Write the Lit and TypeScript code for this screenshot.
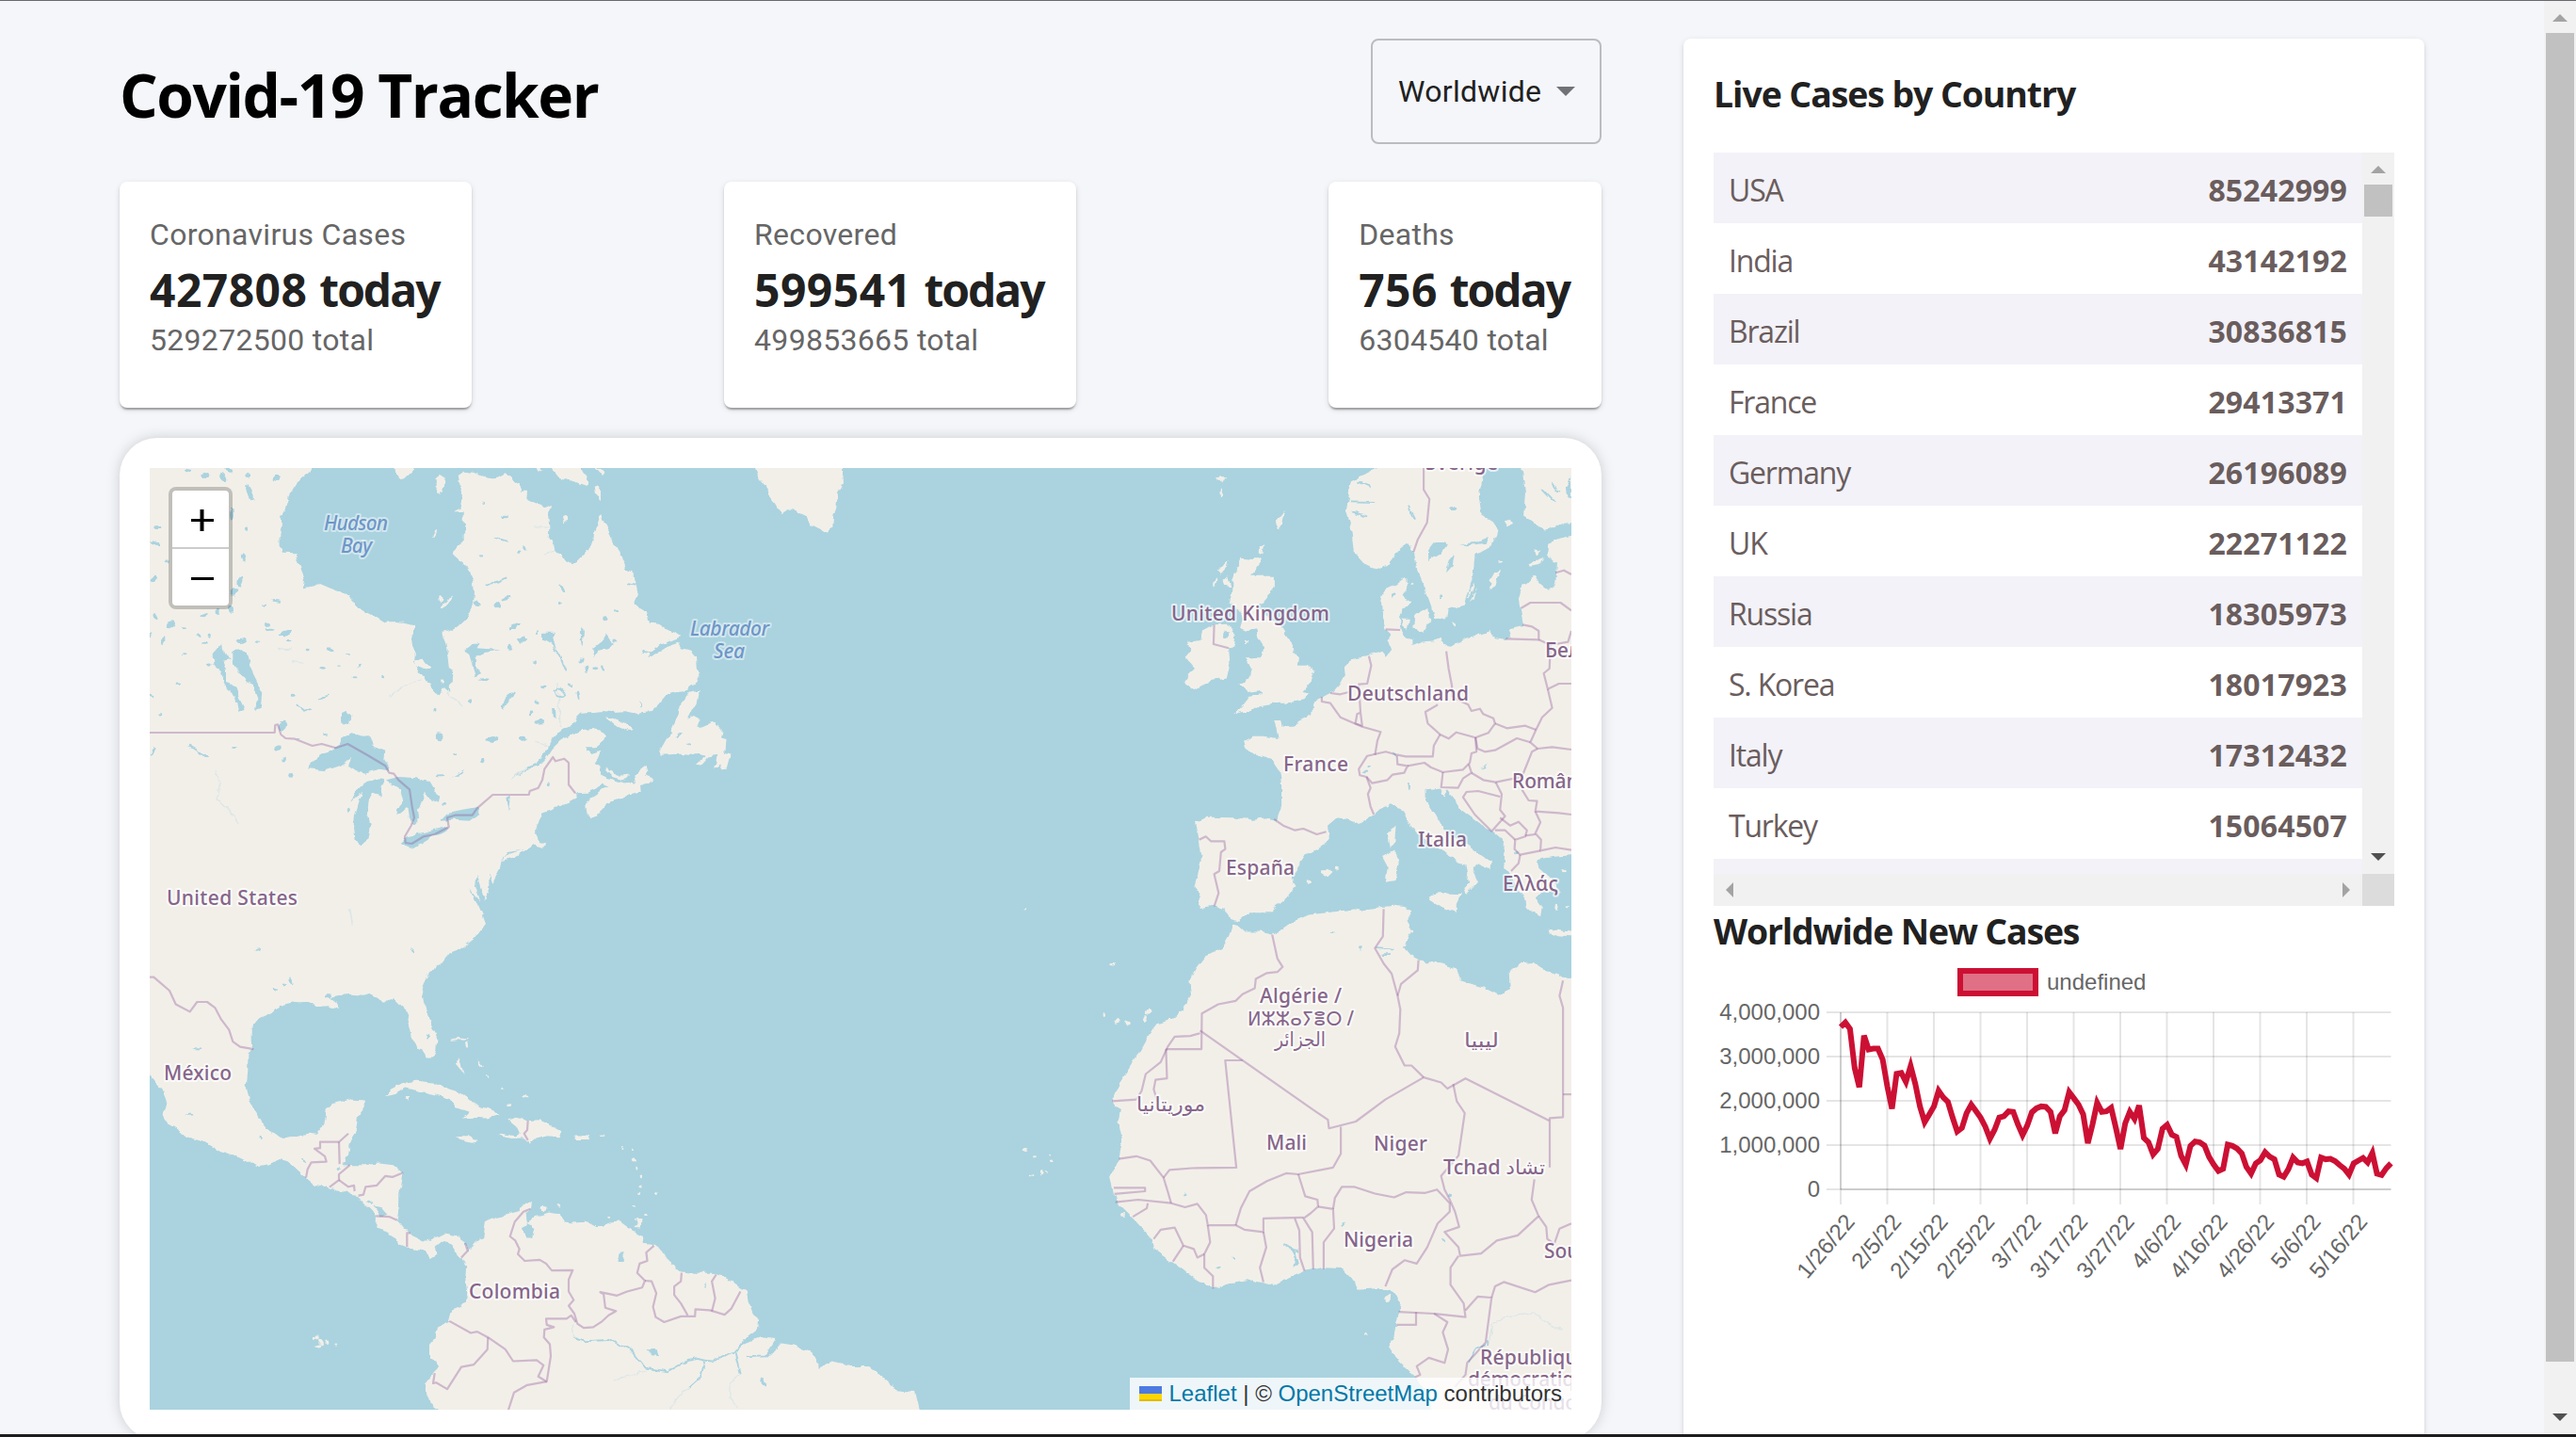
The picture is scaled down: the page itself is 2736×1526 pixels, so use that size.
import { LitElement, html, svg, css } from "lit";
import { customElement, property } from "lit/decorators.js";

/* ---------- map geometry ---------- */

// Survey sheets: origin on the canvas and units per pixel on each axis.
type Sheet = [number, number, number, number];
const SHEETS: Record<string, Sheet> = {
  A: [140, 480, 3, 3],
  B: [540, 480, 3, 3],
  C: [1120, 480, 2.8, 3],
  D: [1120, 960, 2.7034, 2.7703],
  E: [140, 960, 3, 2.7703],
  F: [600, 960, 2.8, 2.7703],
};

// "A 1,2 3,4 B 5,6" -> canvas points; a letter switches the sheet.
function trace(src: string, close = false): string {
  let sheet = SHEETS.A;
  const out: string[] = [];
  for (const token of src.trim().split(/\s+/)) {
    if (SHEETS[token]) {
      sheet = SHEETS[token];
      continue;
    }
    const [x, y] = token.split(",").map(Number);
    out.push(`${(sheet[0] + x / sheet[2]).toFixed(1)} ${(sheet[1] + y / sheet[3]).toFixed(1)}`);
  }
  return "M" + out.join("L") + (close ? "Z" : "");
}

const LAND = [
  // Americas
  `A 40,30 572,30 572,51 565,65 545,80 525,100 512,120 500,140 495,160 488,185 478,205 476,235 472,265 473,300 480,323 524,325 533,355 545,385 552,410 546,436 575,430 600,420 635,435 670,448 695,465 710,480 720,498 750,512 780,528 808,545 840,543 870,546 898,553 896,590 892,605 903,630 900,672 915,700 935,725 950,735 960,765 980,775 995,750 1012,765 1010,745 1022,730 1024,705 1010,685 1005,640 1000,610 992,590 988,572 1015,568 1045,550 1070,525 1088,490 1092,450 1088,410 1075,375 1050,350 1022,325 1035,300 1055,285 1055,260 1065,245 1055,220 1055,190 1025,190 1045,180 1052,150 1053,125 1042,100 1037,75 1055,62 1085,65 1110,75 1145,82 1165,80 1190,67 1215,90 1235,105 1240,125
   B 60,125 58,150 75,158 105,168 115,180 135,170 127,205 130,240 128,280 145,300 150,315 170,325 180,345 203,358 230,342 240,320 255,315 268,285 270,260 280,240 290,210 297,200 305,220 320,250 330,280 345,305 355,330 370,355 375,370 398,385 400,410 408,430 412,450 400,480 415,495 440,510 450,545 480,548 500,562 530,572 550,588 520,600 490,612 455,635 445,655 475,640 505,620 540,608 552,625 580,632 600,655 602,690 605,725 585,745 560,763 535,765 505,775 480,805 458,825 430,828 400,832 370,826 330,828 300,825 270,828 232,830 212,850 205,873 180,880 160,895 140,915 125,945 110,965 90,990 60,1005 30,1025 10,1040 30,1030 60,1012 98,998 120,975 140,945 165,920 200,900 235,885 270,882 295,887 312,905 305,925 280,940 245,940 265,960 295,950 285,975 275,990 292,1000 295,1025 310,1040 330,1045 350,1052 385,1050 405,1055 400,1035 415,1015 440,995 445,1020 440,1030 460,1040 445,1055 420,1062 422,1080 395,1088 370,1100 335,1110 312,1120 305,1135 290,1150 265,1165 250,1150 247,1125 260,1105 285,1088 300,1075 320,1065 300,1055 280,1072 250,1085 213,1087 215,1105 190,1118 165,1128 150,1130 140,1140 112,1150 100,1170 90,1195 80,1215 92,1225 95,1240 117,1250 110,1262 80,1255 60,1265 30,1270 0,1275
   A 1178,1300 1172,1330 1160,1350 1150,1380 1138,1345 1138,1390 1125,1430 1115,1400 1100,1350 1095,1380 1110,1430 1075,1390 1105,1445 1120,1480
   E 1095,15 1112,25 1125,60 1095,100 1050,130 1010,145 985,175 955,195 935,220 923,250 930,285 945,325 960,360 973,395 970,430 960,450 935,450 925,430 905,415 890,390 880,350 883,320 860,300 835,275 800,290 785,275 760,263 735,268 700,265 650,270 635,280 650,290 660,310 625,300 590,302 565,290 520,288 485,295 468,300 450,318 410,335 395,350 380,370 380,400 388,425 370,440 370,490 365,540 378,585 395,610 415,640 435,665 460,675 480,690 520,682 560,675 590,678 610,655 617,630 620,600 640,587 695,575 740,578 740,600 720,625 715,660 705,685 695,705 690,740 670,765 700,768 740,768 790,763 830,768 845,780 865,792 860,820 853,850 852,890 845,925 865,950 890,975 930,993 960,985 995,968 1030,975 1060,995 1075,1020 1090,1000 1120,980 1128,935 1160,922 1195,915 1230,905 1250,880 1275,880 1272,895 1255,905 1260,935 1290,918 1330,907 1360,912 1378,935 1410,938 1450,935 1480,950 1500,950
   F 130,938 165,935 200,960 232,975 235,1000 265,1002 290,1020 308,1050 345,1082 385,1085 440,1085 480,1100 540,1138 545,1170 560,1205 580,1220 578,1245 545,1270 520,1300 545,1290 580,1275 628,1280 615,1310 590,1330 610,1325 640,1292 680,1297 730,1318 750,1335 752,1365 790,1347 850,1360 900,1360 945,1390 990,1430 1042,1435 1060,1510
   E 990,1510 978,1488 940,1460 940,1435 930,1412 950,1390 975,1365 970,1345 948,1340 948,1300 965,1280 975,1245 1010,1230 1020,1195 1050,1185 1070,1155 1063,1100 1065,1065 1050,1040 1030,1020 1015,995 985,990 965,1005 970,1030 950,1042 930,1020 900,1015 875,1008 850,1000 845,985 800,960 778,955 780,920 755,895 730,870 712,855 680,850 630,835 585,825 555,805 520,775 490,755 465,750 440,765 410,770 370,760 330,742 280,725 230,700 175,685 150,665 120,650 100,620 112,585 98,545 57,502 40,490`,
  `A 838,40 840,65 850,88 870,85 905,51 915,40`,
  `A 980,72 998,80 995,105 982,132 968,110 968,85`,
  `A 905,665 930,662 952,685 945,692 900,678`,
  `A 1200,1282 1240,1268 1255,1268 1215,1295 1175,1305`,
  `B 120,30 135,51 160,80 200,92 250,108 255,95 230,51 220,30`,
  `B 272,110 285,105 297,125 297,150 275,130`,
  `B 172,205 185,200 187,215 172,228`,
  `B 275,45 310,62 300,75`,
  `B 85,45 110,55 95,62`,
  `B 303,843 340,850 370,860 398,885 385,888 345,872`,
  `B 612,755 575,765 550,805 540,840 525,870 520,895 500,915 480,950 485,965 540,962 580,965 610,962 630,968 600,995 615,998 640,970 665,965 658,1005 680,990 678,1012 695,1010 707,965 690,960 695,915 675,910 680,885 655,860 615,878 600,870 608,850 590,840 568,855 585,820 600,795 605,770`,
  `B 312,1000 320,1015 350,1028 385,1025 365,1045 330,1035 310,1015`,
  `B 780,30 788,51 800,85 820,110 830,140 850,165 868,195 890,183 920,190 950,205 960,230 1010,255 1033,240 1035,205 1045,175 1050,130 1065,100 1062,51 1062,30`,
  `E 808,565 825,545 860,528 905,520 960,525 1010,545 1045,555 1080,580 1110,595 1150,608 1172,622 1130,630 1080,628 1055,630 1075,612 1035,598 1020,575 985,565 940,555 905,548 870,542 840,560`,
  `E 1198,635 1225,628 1260,637 1300,635 1330,650 1365,668 1368,685 1320,682 1290,688 1268,705 1250,688 1210,690 1168,680 1175,675 1220,682 1235,675 1225,655`,
  `E 1032,682 1070,682 1102,695 1080,700 1045,692`,
  `E 1412,680 1462,680 1455,695 1412,695`,
  `E 1035,452 1050,475 1058,498 1045,485 1032,470`,
  `E 870,565 885,565 885,578 872,575`,
  `F 210,928 228,928 226,952 205,950 215,942`,
  // Europe
  `C 555,335 600,340 617,335 605,365 580,395 620,395 655,395 655,425 640,455 620,480 600,490 640,530 675,560 700,600 712,640 725,655 722,680 755,680 770,700 760,735 735,765 758,770 740,790 690,800 650,800 610,808 590,825 555,825 535,835 560,808 580,780 620,770 605,760 575,765 550,740 580,720 585,690 568,655 615,655 622,620 605,590 600,565 575,570 552,560 560,530 550,500 520,480 530,440 530,400 540,380`,
  `C 475,550 520,548 538,590 535,615 518,625 522,670 512,718 470,725 415,760 385,735 395,715 420,690 390,655 410,630 395,605 435,600 440,570`,
  `C 487,380 517,343 512,370 495,390`,
  `C 500,410 515,395 525,430 505,425`,
  `C 478,82 510,78 498,98 490,92`,
  `C 688,186 675,225 672,248 660,222`,
  `C 610,300 625,292 620,322 610,318`,
  `C 563,920 590,905 620,905 665,912 660,880 653,858 675,858 680,875 715,875 725,855 765,835 768,795 795,785 830,765 850,740 865,710 862,685 885,660 935,650 975,635 985,650 1000,630 990,600 1000,580 985,565 975,530 972,480 980,440 1010,425 1045,398 1048,430 1035,460 1060,475 1035,500 1025,540 1030,570 1045,590 1065,595 1065,618 1095,605 1130,600 1150,590 1160,615 1175,620 1230,595 1270,578 1297,570 1310,595 1340,600 1360,590 1350,565 1395,555 1385,500 1380,470 1390,425 1430,395 1445,420 1470,440 1490,420 1495,355 1465,330 1468,290 1500,275 1560,262 1560,1285 1537,1285 1480,1290 1435,1300 1440,1325 1465,1350 1490,1375 1497,1400 1455,1400 1430,1420 1450,1450 1445,1480 1420,1465 1405,1450 1400,1420 1375,1390 1355,1345 1335,1310 1338,1240 1305,1210 1270,1190 1240,1165 1210,1140 1195,1115 1165,1075 1158,1100 1145,1070 1105,1075 1105,1110 1130,1150 1155,1200 1195,1230 1240,1262 1300,1305 1298,1330 1255,1310 1242,1330 1260,1370 1225,1410 1218,1390 1235,1375 1222,1320 1180,1290 1140,1265 1100,1235 1060,1195 1040,1145 1000,1120 975,1130 950,1155 905,1185 870,1170 840,1165 812,1190 818,1235 780,1265 745,1285 720,1325 705,1355 715,1385 690,1420 655,1450 640,1465 580,1465 545,1495 520,1485 505,1455 475,1445 430,1452 435,1410 415,1385 430,1330 438,1290 430,1235 420,1180 455,1160 530,1162 590,1172 630,1168 660,1175 675,1130 675,1060 670,1020 645,980 600,965 570,945`,
  `C 1390,30 1390,51 1400,130 1395,200 1440,235 1455,250 1490,235 1560,215 1560,30`,
  `C 985,30 960,51 905,80 880,95 875,140 868,185 880,230 885,270 890,320 920,355 955,373 990,360 1025,310 1050,290 1070,320 1080,380 1100,430 1120,490 1130,535 1165,532 1170,500 1220,488 1235,430 1245,390 1250,330 1300,300 1320,250 1300,220 1270,200 1262,140 1275,70 1290,51 1290,30`,
  `C 1295,410 1308,385 1328,375 1310,420 1298,440 1292,430`,
  `C 1235,480 1255,425 1245,470`,
  `C 1410,355 1455,335 1440,360 1415,365`,
  `C 1425,310 1448,315 1435,330`,
  `C 1338,220 1355,215 1362,230 1348,238`,
  `C 1070,520 1110,495 1115,540 1095,575 1068,560`,
  `C 1030,530 1055,530 1050,560 1035,555`,
  `C 1182,540 1195,550 1190,560`,
  `C 990,1215 1015,1190 1012,1240 1000,1265`,
  `C 975,1290 1010,1268 1025,1300 1015,1365 985,1370 990,1320`,
  `C 1115,1415 1140,1405 1210,1408 1195,1440 1195,1468 1150,1450 1115,1425`,
  `C 790,1342 812,1328 825,1338 808,1355`,
  `C 1465,1520 1500,1524 1560,1532 1560,1545 1500,1540 1468,1530`,
  `C 565,600 578,600 570,612`,
  // Africa
  `D 512,62 525,62 545,82 590,82 625,90 655,75 690,50 730,32 790,25 860,15 890,20 930,10 975,5 1005,8 1028,20 1010,50 1028,80 1000,125 1020,150 1060,172 1110,175 1155,190 1165,225 1230,245 1280,270 1307,245 1305,200 1340,175 1375,172 1410,195 1450,208 1470,222 1510,218 1510,1510 1095,1510 1085,1488 1060,1425 1035,1390 990,1345 960,1300 975,1270 980,1240 990,1200 995,1170 970,1140 930,1130 875,1135 850,1100 825,1072 770,1070 720,1080 675,1100 628,1122 565,1107 500,1118 455,1132 400,1100 340,1055 290,1020 280,985 230,930 190,890 170,855 160,800 185,750 195,695 183,640 188,610 165,580 185,530 210,490 235,450 265,395 290,355 335,340 370,310 392,270 388,225 405,190 430,155 480,130 500,95`,
];

const WATER = [
  `A 558,1008 590,975 630,950 658,935 665,915 700,895 735,905 760,903 770,935 808,950 805,980 820,1005 818,1015 790,1010 745,1022 715,1015 690,998 700,975 660,1000 615,1015`,
  `A 700,1115 715,1080 740,1055 790,1042 805,1045 790,1070 795,1095 770,1085 755,1110 750,1150 762,1190 755,1230 728,1252 710,1240 705,1200 710,1160 725,1110 735,1085 715,1100`,
  `A 810,1045 850,1035 900,1038 950,1050 980,1100 978,1115 945,1100 925,1085 930,1110 912,1135 915,1170 895,1188 885,1165 880,1130 848,1158 840,1145 865,1115 855,1075`,
  `A 857,1245 880,1225 910,1215 940,1210 1010,1190 1000,1210 960,1225 920,1250 890,1262`,
  `A 980,1175 1005,1150 1050,1140 1105,1130 1105,1155 1075,1175 1030,1172`,
  `A 322,630 350,628 370,645 380,685 395,725 415,765 410,815 393,822 400,785 385,745 365,735 345,700 322,665`,
  `A 260,640 285,610 290,640 318,660 290,665 300,700 300,735 330,745 345,790 362,825 340,830 330,780 310,760 295,740 285,700 262,680`,
  `A 670,830 685,825 700,840 697,870 670,868 664,850`,
  `A 1180,810 1190,785 1220,768 1200,795 1183,822`,
  `A 1060,635 1090,612 1105,605 1102,625 1140,628 1175,630 1130,638 1090,650 1100,690 1110,705 1095,715 1085,680 1075,645`,
  `A 1198,1095 1208,1095 1204,1145`,
  `A 1012,1040 1060,1010 1050,1022`,
  `B 268,625 300,600 312,580 335,610 320,628 285,632 275,655`,
  `B 110,575 150,575 140,600 150,625 130,605 112,595`,
  `B 0,555 38,547 20,560 0,562`,
  `B 30,595 55,590 35,610`,
  `B 138,815 150,820 152,850 140,840`,
  `B 232,560 240,570 236,620 230,600`,
  `B 82,858 105,850 115,865 90,866`,
  `E 1245,955 1258,935 1265,940 1280,962 1275,982 1258,982`,
  `E 772,888 790,892 812,915 795,918`,
  `E 938,385 948,380 955,392 944,398`,
  `C 1112,310 1130,285 1160,285 1165,300 1148,325 1112,348`,
  `C 1165,385 1172,345 1190,322 1184,362`,
  `C 1205,295 1250,288 1290,270 1285,290 1230,298`,
  `C 1520,110 1537,80 1537,150 1522,135`,
  `C 1268,1010 1290,992 1282,1006`,
  `F 155,1050 165,1025 178,1022 172,1050`,
  `F 245,1310 270,1312 282,1330 262,1328`,
  `F 412,1115 420,1115 418,1130`,
  `F 582,1392 592,1395 598,1418 588,1412`,
  `D 668,1000 690,1020 700,1060 685,1068 690,1040`,
];

const RIVERS = [
  `F 25,1275 60,1283 130,1280 200,1315 240,1365 305,1375 350,1350 390,1338 435,1345 505,1320 540,1280 595,1270`,
  `F 415,1345 405,1390 370,1420`,
  `F 505,1320 520,1380`,
  `F 540,1330 600,1328 628,1285`,
  `B 160,905 200,890`,
  `B 160,750 145,762 152,778 170,782 178,765 162,750`,
  `B 140,620 165,650 185,700`,
  `B 425,635 455,640 480,628`,
  `B 380,420 405,425`,
  `A 180,935 205,945 215,965 245,966`,
  `A 1130,428 1165,412 1195,400`,
  `A 1155,272 1200,285`,
  `A 527,805 550,824 570,815`,
  `C 878,160 955,162`,
  `C 885,190 930,205`,
  `C 900,95 940,110`,
  `C 1050,170 1070,215`,
  `C 1450,115 1490,160`,
  `C 1480,100 1500,130`,
  `D 925,128 975,132`,
  `D 940,150 960,150`,
  `D 655,1000 700,1020`,
  `D 1190,1345 1210,1310 1235,1298`,
];

const FAINT = [
  `F 310,1488 340,1450 370,1420`,
  `F 145,1405 175,1392 240,1372`,
  `F 520,1380 490,1410 490,1450 515,1488`,
  `D 1248,1290 1255,1240 1300,1210 1375,1202 1410,1230 1460,1255`,
  `A 268,1015 282,1070 270,1110 305,1135 340,1185`,
  `A 510,668 545,672`,
  `A 465,625 510,630`,
  `A 820,778 870,745 920,722`,
  `A 1005,765 1050,810`,
  `A 695,1455 702,1500`,
  `E 695,15 702,60`,
  `B 155,735 162,800 165,880`,
  `B 85,240 125,240`,
  `B 115,325 150,310`,
  `B 10,1040 60,1005`,
  `B 85,922 125,935`,
  `E 1405,1240 1408,1270 1440,1283 1500,1280`,
];

const BORDERS = [
  `A 57,894 455,894 457,870 465,868 475,900 490,912 520,914 575,936 605,930 650,943 688,930 750,965 808,1000 820,1022 835,1025 850,1045 885,1075 893,1130 900,1165 890,1190 870,1225 872,1245 892,1248 930,1225 965,1218 1010,1195 1005,1165 1030,1157 1085,1157 1100,1135 1150,1092 1265,1092 B 68,1080 95,1070 108,1045 115,1010 142,972 150,985 178,977 192,990 192,1060 213,1087`,
  `E 57,215 70,215 120,255 140,295 185,317 208,288 240,288 265,305 285,340 310,370 322,405 345,420 388,427`,
  `E 555,805 560,780 572,760 620,758 615,742 582,720 600,718 600,700 660,700 690,675`,
  `E 660,700 662,765`,
  `E 695,768 660,795 660,812 630,833`,
  `E 660,812 690,832 708,828 710,845`,
  `E 722,858 738,855 745,832 780,828 808,800 830,803 865,790`,
  `E 778,918 820,920 845,930`,
  `E 887,968 877,968 877,1008`,
  `E 1062,998 1070,1020 1050,1040`,
  `E 1262,637 1260,665 1250,675 1262,695`,
  `E 1270,897 1248,905 1220,935 1205,978 1222,990 1235,1015 1230,1030 1252,1050 1300,1047 1320,1058 1338,1078 1405,1077 1392,1105 1392,1140 1408,1165 1392,1182 1410,1205 1420,1235 1440,1247 1470,1245 F 110,1228 130,1210 152,1198 120,1188 115,1148 105,1142 155,1152 185,1140 230,1128 238,1108 215,1085 222,1058 245,1050 242,1025 265,1005`,
  `E 1415,1230 1400,1210 1385,1220 1320,1220 1322,1238 1345,1245 1315,1252 1313,1275 1332,1295 1335,1330 1322,1405 1295,1390 1312,1357 1290,1342 1215,1345 1190,1310 1135,1275 1100,1258 1080,1262 1012,1227`,
  `E 1135,1275 1133,1310 1090,1355 1050,1362 1005,1427 970,1408 960,1410 965,1380`,
  `E 1322,1405 1260,1415 1218,1437 1200,1488`,
  `F 238,1108 258,1110 272,1145 262,1185 270,1215 295,1230 345,1213 387,1213 388,1192 430,1195 475,1208 495,1190 522,1140`,
  `F 347,1085 345,1110 325,1125 325,1150 345,1175 365,1210`,
  `F 450,1090 437,1110 447,1160 437,1198`,
  `C 1098,51 1098,120 1115,150 1108,225 1080,280 1068,318`,
  `C 985,565 1028,567`,
  `C 475,550 473,612 518,625`,
  `C 1490,385 1515,377 1537,390`,
  `C 1388,497 1415,480 1505,480 1537,505`,
  `C 1392,550 1420,556 1440,570 1440,598 1342,595`,
  `C 1440,598 1475,615 1472,690 1455,705 1467,755 1500,738 1537,738`,
  `C 1537,570 1527,605 1475,615`,
  `C 1467,755 1480,815 1450,845 1432,885 1415,925 1437,945 1480,940 1537,948`,
  `C 1165,635 1172,690 1182,745 1182,780`,
  `C 1140,805 1103,828 1110,865 1147,900 1172,913 1195,893 1252,910 1290,895 1310,865 1305,848 1275,835 1265,818 1240,825 1230,805 1182,780`,
  `C 1310,865 1345,880 1400,872 1432,885`,
  `C 1252,910 1258,945 1280,955 1310,950 1375,912 1415,925`,
  `C 1147,900 1128,935 1125,970 1045,970 1020,965 985,955 930,968 905,1010 908,1030 928,1035 945,1055 990,1045 1005,1028 1040,1022 1050,1000 1020,995 1018,965`,
  `C 1050,1000 1100,990 1120,1005 1155,1020 1215,1012 1235,990 1240,960 1255,955 1252,910`,
  `C 1155,1020 1150,1068 1200,1070 1215,1040 1240,1022 1232,995`,
  `C 1240,1022 1275,1045 1312,1052 1390,1035 1420,955 1437,945`,
  `C 1312,1052 1330,1090 1325,1140 1340,1160 1300,1208 1250,1155 1215,1100 1225,1083 1260,1080 1325,1098`,
  `C 1390,1075 1410,1110 1435,1112 1430,1145 1500,1150 1537,1155`,
  `C 1430,1145 1445,1180 1430,1215 1447,1235 1445,1270 1490,1260 1537,1268`,
  `C 1325,1165 1355,1190 1380,1178 1405,1205 1400,1225 1370,1235 1368,1265 1385,1283 1445,1270`,
  `C 1385,1283 1380,1310 1358,1335`,
  `C 1400,1222 1430,1218`,
  `C 1310,1205 1340,1205 1370,1235`,
  `C 653,1170 680,1190 715,1205 740,1200 780,1218 808,1210`,
  `C 430,1235 450,1225 465,1240 505,1240 508,1265 495,1275 490,1335 475,1345 488,1405 475,1448`,
  `C 950,1155 940,1130 932,1090 940,1070 928,1035`,
  `C 953,965 960,920 970,892 915,875 850,845 820,800 795,795 795,780`,
  `C 820,768 850,772 875,765`,
  `C 935,650 942,680 930,738 905,740 910,830 915,872 895,865 900,835 910,830`,
  `D 945,15 943,95 920,130 945,175 968,205 985,270 993,310 990,380 978,420 1005,475 1025,475 1060,510`,
  `D 1045,165 1043,195 995,235 985,270`,
  `D 625,90 640,160 655,185 640,200 610,203 578,220 575,248 540,265 520,285 470,295 423,322 422,427 320,427`,
  `D 418,380 390,388 345,390 325,420 305,465 262,500 250,550 235,575 165,580`,
  `D 320,427 323,513 290,517 285,545 295,580`,
  `D 418,372 742,605 785,635 788,660 865,640 950,575 1060,510 1110,525 1128,543 1180,513 1420,637`,
  `D 540,460 490,460 522,775 395,777 330,782 313,805`,
  `D 185,750 235,742 275,755 313,805 325,845 335,880`,
  `D 170,835 260,835 260,845 172,853`,
  `D 175,877 240,870 335,880 375,892 410,882 435,915 440,945 520,945 545,958 600,965 600,925 715,922`,
  `D 520,945 535,895 560,845 610,815 665,792 700,795 800,775 822,735 822,655`,
  `D 700,795 720,860 755,870 757,890 735,910 715,925 740,965 743,1075`,
  `D 757,890 800,897 803,955 773,995 773,1075`,
  `D 690,925 703,960 705,1040 718,1080`,
  `D 600,965 608,1010 590,1070 600,1112`,
  `D 440,945 447,995 430,1030 430,1070 455,1095 455,1132`,
  `D 268,880 265,895 225,920`,
  `D 285,985 305,958 345,952 370,1005 400,1015 410,1040 430,1030`,
  `D 370,1005 340,1052`,
  `D 800,897 805,865 825,832 860,832 920,852 975,863 1010,848 1065,850 1098,840 1135,880 1135,905 1100,940 1070,1010 1040,1058 1005,1048 970,1075 950,1125`,
  `D 1145,530 1155,580 1178,615 1160,740 1110,800 1120,840 1135,870 1150,905 1162,950 1120,965 1160,1010 1165,1035 1225,1028 1270,990 1330,975 1390,918 1370,870 1378,810`,
  `D 1160,1035 1137,1070 1137,1120 1175,1175 1180,1215 1090,1205 988,1200`,
  `D 1090,1205 1128,1230 1115,1260 1130,1310 1120,1350 1075,1335 1040,1360 1050,1385 1035,1392`,
  `D 1038,1200 1038,1238 983,1238`,
  `D 1180,1195 1215,1155 1255,1158 1238,1290 1185,1350 1180,1385 1150,1420`,
  `D 1255,1158 1265,1125 1290,1112 1380,1142 1420,1120 1484,1107`,
  `D 1390,918 1412,950 1415,985 1435,1000 1450,955 1484,940`,
  `D 1460,225 1450,270 1460,305 1460,627 1422,630 1422,775`,
  `D 1460,560 1484,560`,
];

// Small lakes: sheet, then x,y,rx,ry,angle in sheet units / pixels.
const PONDS: [string, number, number, number, number, number][] = [
  ["A", 235, 75, 5, 3, 0], ["A", 290, 80, 5, 3, 60], ["A", 178, 58, 2, 2, 0], ["A", 310, 58, 4, 2, 20],
  ["A", 375, 130, 2.5, 9, -20], ["A", 460, 85, 4, 3, -40], ["A", 370, 75, 2, 2, 0], ["A", 82, 240, 4, 2, 0],
  ["A", 75, 292, 6, 2, 20], ["A", 70, 405, 5, 3, -20], ["A", 110, 350, 2, 1.5, 0], ["A", 363, 245, 2, 3, 0],
  ["A", 345, 410, 3, 6, 20], ["A", 325, 445, 5, 3, -20], ["A", 355, 340, 2, 4, -20], ["A", 318, 200, 2, 6, 0],
  ["A", 123, 550, 5, 4, 0], ["A", 75, 525, 4, 2, 70], ["A", 98, 600, 1.5, 4, 10], ["A", 60, 580, 1.5, 2, 0],
  ["A", 165, 562, 3, 1, 0], ["A", 170, 643, 3, 1, 0], ["A", 232, 520, 4, 1.5, -20], ["A", 275, 510, 2, 3, 0],
  ["A", 315, 500, 2, 4, 0], ["A", 420, 490, 3, 1.2, -20], ["A", 460, 472, 4, 1.2, 10], ["A", 488, 578, 6, 3, -20],
  ["A", 432, 548, 3, 2, 0], ["A", 400, 605, 3, 1.2, 0], ["A", 440, 565, 4, 1.5, 0], ["A", 500, 600, 3, 1.3, 0],
  ["A", 560, 630, 2, 1.2, 0], ["A", 632, 632, 4, 2, 20], ["A", 690, 642, 3, 1, 0], ["A", 607, 688, 3, 1.4, 0],
  ["A", 660, 680, 2, 1.2, 0], ["A", 722, 680, 1.5, 2, 0], ["A", 708, 718, 2.5, 1, 0], ["A", 797, 714, 1.5, 1.2, 0],
  ["A", 215, 585, 3, 2, 40], ["A", 245, 588, 3, 1.5, 60], ["A", 232, 610, 3, 1.5, 0], ["A", 350, 600, 5, 2.5, -20],
  ["A", 248, 678, 3, 1.5, 0], ["A", 148, 740, 3, 1.2, 0], ["A", 62, 778, 3, 1.2, 20], ["A", 88, 835, 2, 1.2, 0],
  ["A", 610, 780, 6, 1, -20], ["A", 515, 775, 3, 1.5, 0], ["A", 480, 872, 4, 5, 20], ["A", 465, 942, 4, 2, -20],
  ["A", 327, 942, 3, 1, 0], ["A", 68, 955, 4, 1.3, -50], ["A", 485, 980, 2, 3, 20], ["A", 508, 1030, 2, 2.5, 0],
  ["A", 615, 900, 2, 1, 0], ["A", 688, 1138, 1.5, 2.5, 0], ["A", 995, 1120, 2.5, 1.5, 0], ["A", 980, 1030, 5, 1, 0],
  ["A", 980, 905, 4, 3, 30], ["A", 1078, 793, 2.5, 2, 0], ["A", 966, 821, 1.5, 2, 0], ["A", 1150, 915, 6, 3, 0],
  ["A", 1245, 914, 3, 3, 0], ["A", 1245, 598, 4, 3, -20], ["A", 1205, 620, 3, 3, 0], ["A", 1218, 553, 6, 2, -20],
  ["A", 1165, 488, 5, 3, 20], ["A", 1100, 482, 3, 3, 60], ["A", 1115, 328, 3, 1.2, 0], ["A", 1188, 204, 3, 1.2, 0],
  ["A", 1118, 165, 1.3, 2, 0], ["A", 1192, 468, 5, 1.3, -20], ["A", 1120, 985, 2, 3, 0], ["A", 1030, 962, 3, 1, -20],
  ["A", 1120, 728, 5, 1.3, 0], ["A", 530, 915, 3, 1, 0],
  ["B", 52, 305, 2, 3, -20], ["B", 34, 320, 2, 1.2, 0], ["B", 172, 435, 1.3, 5, -30], ["B", 162, 480, 2, 2, 0],
  ["B", 310, 532, 2, 2, 0], ["B", 345, 505, 2, 1.5, 0], ["B", 340, 600, 2, 1.5, 0], ["B", 248, 692, 2, 4, 0],
  ["B", 278, 688, 2.5, 2, 0], ["B", 302, 693, 4, 1.5, 60], ["B", 80, 670, 2.5, 1.5, -20], ["B", 90, 577, 1, 2, 0],
  ["B", 112, 748, 2, 2, 0], ["B", 195, 742, 2.5, 1.3, 30], ["B", 8, 775, 4, 2, -30], ["B", 90, 800, 2.5, 2, 20],
  ["B", 47, 914, 3, 2.5, 20], ["B", 127, 1058, 1.5, 2.5, 0], ["B", 72, 832, 1.3, 3, 0], ["B", 420, 805, 1, 3, 0],
  ["B", 573, 932, 2, 1.5, 0], ["B", 545, 900, 5, 1, -40], ["B", 222, 775, 1, 5, -10], ["B", 234, 665, 1.2, 3, 20],
  ["E", 627, 272, 4, 2, 0], ["E", 208, 427, 4, 1, 0], ["E", 187, 620, 4, 1, 0], ["E", 403, 134, 3, 1, -20],
  ["E", 505, 225, 1.5, 4, -20], ["E", 488, 236, 3, 1.2, 20], ["E", 457, 252, 3, 1.2, 30], ["E", 895, 138, 3, 1, 50],
  ["E", 410, 687, 3, 1, 40], ["E", 758, 880, 3, 1.3, 30], ["E", 662, 776, 2.5, 1, 0], ["E", 545, 756, 4, 1, 30],
  ["C", 1185, 180, 4, 2, 0], ["C", 510, 582, 3, 4, 10], ["C", 925, 1022, 3, 1.5, -30], ["C", 933, 998, 2, 1, -30],
  ["C", 1055, 1065, 1.2, 3, 0], ["C", 1012, 962, 2.5, 1, 20], ["C", 1375, 1278, 2, 2, 0], ["C", 828, 1530, 2, 1, 0],
  ["C", 1150, 460, 1.5, 2, 0], ["C", 1010, 455, 3, 1.5, -30], ["C", 1525, 1330, 6, 3, 30],
  ["D", 1136, 855, 2, 2.5, 0], ["D", 878, 130, 1.8, 1.5, 0], ["D", 372, 855, 1.8, 1.5, 0], ["D", 829, 942, 1.2, 3, 0],
  ["D", 516, 1042, 1, 3, -30], ["D", 470, 1070, 3, 1, -20], ["D", 1115, 990, 3, 1, 30], ["D", 1243, 1292, 1.5, 2.5, 0],
];

const ISLETS: [string, number, number, number, number, number][] = [
  ["F", 208, 752, 2.5, 2, 0], ["F", 215, 775, 1.5, 2, 0], ["F", 225, 803, 1.5, 2.5, -20], ["F", 227, 830, 1.5, 2, 0],
  ["F", 220, 850, 1.5, 1.2, 0], ["F", 205, 887, 1.5, 1.2, 0], ["F", 202, 725, 1.2, 1.2, 0], ["F", 170, 716, 2, 0.8, 40],
  ["F", 272, 852, 1.8, 1.5, 0], ["F", 238, 914, 2, 1, 0], ["F", 128, 923, 2.5, 1.5, 0], ["F", 108, 682, 3, 0.8, 0],
  ["F", 1370, 726, 2.5, 2, 0], ["F", 1397, 743, 2, 1, 0], ["F", 1443, 757, 2, 1.8, 0], ["F", 1418, 790, 2, 2, 0],
  ["F", 1388, 797, 3, 1, -20], ["F", 1440, 738, 1, 1, 0], ["F", 1433, 787, 1, 1, 0], ["F", 1372, 16, 1, 0.8, 0],
  ["E", 590, 1275, 2, 2, 0], ["E", 595, 1300, 4, 1.5, -10], ["E", 580, 1278, 1.5, 2, 0], ["E", 603, 1288, 4, 1.5, 50],
  ["E", 622, 1290, 2, 1.2, 0], ["E", 652, 1298, 2, 1, 0], ["E", 1313, 895, 3, 3, 0], ["E", 1360, 885, 3, 1, 10],
  ["E", 1055, 398, 6, 1, 0], ["E", 1070, 412, 1.2, 3, -10], ["E", 1110, 470, 4, 1, 50], ["E", 1135, 505, 3, 1, 50],
  ["E", 1180, 545, 2, 1, 0], ["E", 1200, 592, 3, 1.2, -10], ["E", 1255, 568, 4, 1, 10], ["E", 1030, 400, 5, 1, -10],
  ["D", 180, 343, 3, 2.5, -40], ["D", 209, 352, 2.5, 2.5, 0], ["D", 140, 327, 1.2, 2, 0], ["D", 258, 338, 2, 4, 20],
  ["D", 268, 318, 2, 3, 20], ["D", 167, 178, 2.5, 1.2, 0], ["D", 956, 1160, 2, 3.5, 25], ["D", 892, 1265, 1.8, 2, 0],
  ["D", 196, 914, 2.5, 2, 0], ["C", 758, 1370, 2, 2, 0], ["C", 843, 1327, 3, 1.3, 20], ["C", 495, 130, 1.2, 4, 0],
  ["C", 478, 415, 1.2, 6, 8], ["C", 1515, 1330, 3, 1.5, 30], ["C", 1500, 1400, 2, 1, 0], ["C", 1525, 1450, 2, 1, 0],
  ["C", 1065, 420, 2, 1, 0], ["C", 1240, 440, 1, 8, 20], ["C", 1325, 350, 2, 1, 0], ["C", 1492, 1450, 1.5, 2.5, 0],
  ["A", 998, 485, 6, 2, -40], ["A", 1010, 470, 4, 1.5, -60], ["A", 985, 465, 2, 4, 0], ["A", 965, 260, 1, 5, 25], ["A", 990, 732, 2, 1.5, 0],
];

function spot([s, x, y, rx, ry, a]: [string, number, number, number, number, number]) {
  const sh = SHEETS[s];
  const cx = sh[0] + x / sh[2];
  const cy = sh[1] + y / sh[3];
  return svg`<ellipse cx=${cx} cy=${cy} rx=${rx} ry=${ry} transform="rotate(${a} ${cx} ${cy})"></ellipse>`;
}

// text, left, baseline, width
const COUNTRY_LABELS: [string, number, number, number][] = [
  ["United States", 177, 961, 139],
  ["México", 174, 1147, 72],
  ["Colombia", 498, 1379, 97],
  ["United Kingdom", 1244, 659, 168],
  ["Deutschland", 1431, 744, 129],
  ["France", 1363, 819, 69],
  ["Italia", 1506, 899, 52],
  ["España", 1302, 929, 73],
  ["Ελλάς", 1596, 946, 59],
  ["România", 1606, 837, 88],
  ["Беларусь", 1641, 698, 94],
  ["Sverige", 1514, 499, 77],
  ["Algérie /", 1338, 1065, 87],
  ["Mali", 1345, 1221, 43],
  ["Niger", 1459, 1222, 57],
  ["Nigeria", 1427, 1324, 74],
  ["Soudan du Sud", 1640, 1336, 150],
  ["République", 1572, 1449, 116],
  ["démocratique", 1559, 1472, 138],
  ["du Congo", 1581, 1497, 94],
];

const SCRIPT_LABELS: [string, number, number, number][] = [
  ["ⵍⵣⵣⴰⵢⴻⵔ /", 1325, 1089, 113],
  ["الجزائر", 1354, 1111, 54],
  ["ليبيا", 1555, 1112, 37],
  ["موريتانيا", 1207, 1180, 73],
  ["Tchad تشاد", 1533, 1247, 108],
];

const SEA_LABELS: [string, number, number, number][] = [
  ["Hudson", 344, 563, 68],
  ["Bay", 362, 587, 33],
  ["Labrador", 733, 675, 84],
  ["Sea", 758, 699, 33],
];

const label = (glyphs: boolean) => ([t, x, y, w]: [string, number, number, number]) =>
  svg`<text x=${x} y=${y} textLength=${w} lengthAdjust=${glyphs ? "spacingAndGlyphs" : "spacing"}>${t}</text>`;

@customElement("world-map")
export class WorldMap extends LitElement {
  static styles = css`
    :host {
      display: block;
      position: relative;
      width: 1510px;
      height: 1000px;
      overflow: hidden;
      background: #aad3df;
    }
    .canvas {
      display: block;
      width: 100%;
      height: 100%;
    }
    .land {
      fill: #f2efe9;
    }
    .water {
      fill: #aad3df;
    }
    .river {
      fill: none;
      stroke: #aad3df;
      stroke-width: 1.8;
    }
    .faint {
      fill: none;
      stroke: #dbe6e6;
      stroke-width: 1.2;
    }
    .border {
      fill: none;
      stroke: rgba(140, 85, 150, 0.36);
      stroke-width: 2.2;
      stroke-linejoin: round;
    }
    .names {
      font: 500 21px "Noto Sans", "DejaVu Sans", sans-serif;
      stroke: rgba(255, 255, 255, 0.7);
      stroke-width: 4px;
      stroke-linejoin: round;
      paint-order: stroke;
    }
    .country {
      fill: #86658a;
    }
    .sea {
      fill: #6f96c8;
      font-style: italic;
      stroke: rgba(255, 255, 255, 0.45);
    }
    .zoom {
      position: absolute;
      left: 20px;
      top: 20px;
      width: 60px;
      display: flex;
      flex-direction: column;
      border: 4px solid rgba(0, 0, 0, 0.2);
      border-radius: 8px;
      background: #fff;
      background-clip: padding-box;
    }
    .zoom-button {
      display: flex;
      justify-content: center;
      height: 60px;
    }
    .zoom-button + .zoom-button {
      border-top: 2px solid #ccc;
    }
    .zoom-icon {
      width: 60px;
      height: 60px;
      stroke: #000;
      fill: none;
    }
    .credit {
      position: absolute;
      right: 0;
      bottom: 0;
      height: 34px;
      box-sizing: border-box;
      padding: 0 10px;
      display: flex;
      align-items: center;
      background: rgba(255, 255, 255, 0.8);
      color: #333;
      font: 24px/34px "Liberation Sans", Arial, sans-serif;
      white-space: pre;
    }
    .flag {
      width: 24px;
      height: 16px;
      margin-right: 8px;
    }
    .link {
      color: #0078a8;
    }
  `;

  render() {
    return html`
      <svg class="canvas" viewBox="159 497 1510 1000">
        <defs>
          <filter id="coast" x="0" y="0" width="100%" height="100%">
            <feTurbulence type="fractalNoise" baseFrequency="0.11" numOctaves="2" seed="4" result="n"></feTurbulence>
            <feDisplacementMap in="SourceGraphic" in2="n" scale="6" xChannelSelector="R" yChannelSelector="G"></feDisplacementMap>
          </filter>
        </defs>
        <g filter="url(#coast)">
          <rect class="water" x="120" y="460" width="1600" height="1080"></rect>
          ${LAND.map((d) => svg`<path class="land" d=${trace(d, true)}></path>`)}
          ${FAINT.map((d) => svg`<path class="faint" d=${trace(d)}></path>`)}
          ${WATER.map((d) => svg`<path class="water" d=${trace(d, true)}></path>`)}
          ${RIVERS.map((d) => svg`<path class="river" d=${trace(d)}></path>`)}
          <g class="water">${PONDS.map(spot)}</g>
          <g class="land">${ISLETS.map(spot)}</g>
        </g>
        ${BORDERS.map((d) => svg`<path class="border" d=${trace(d)}></path>`)}
        <g class="names">
          <g class="country">${COUNTRY_LABELS.map(label(false))}${SCRIPT_LABELS.map(label(true))}</g>
          <g class="sea">${SEA_LABELS.map(label(false))}</g>
        </g>
      </svg>
      <div class="zoom">
        <div class="zoom-button">
          <svg class="zoom-icon" viewBox="0 0 60 60"><path stroke-width="3" d="M20 31.5H44"></path><path stroke-width="4" d="M31.5 20V43"></path></svg>
        </div>
        <div class="zoom-button">
          <svg class="zoom-icon" viewBox="0 0 60 60"><path stroke-width="3" d="M20 31.5H44"></path></svg>
        </div>
      </div>
      <div class="credit"><svg class="flag" viewBox="0 0 12 8"><path fill="#4C7BE1" d="M0 0h12v4H0z"></path><path fill="#FFD500" d="M0 4h12v3H0z"></path><path fill="#E0BC00" d="M0 7h12v1H0z"></path></svg><span class="link">Leaflet</span> | © <span class="link">OpenStreetMap</span> contributors</div>
    `;
  }
}

/* ---------- line chart ---------- */

// Heights of the daily line above the axis, in 1/395ths of the full scale.
const DAILY = [
  362, 372, 358, 270, 228, 343, 312, 314, 314, 290, 230, 180, 258, 260, 240, 275, 235, 185, 150, 167, 185, 220, 205, 195, 160, 129,
  137, 170, 189, 175, 160, 140, 113, 133, 160, 163, 174, 173, 145, 121, 142, 172, 181, 185, 184, 173, 125, 163, 177, 217, 203, 189,
  167, 103, 145, 193, 173, 174, 182, 137, 90, 147, 173, 157, 187, 115, 105, 78, 90, 135, 144, 122, 117, 75, 55, 97, 107, 105, 98,
  72, 55, 41, 46, 100, 97, 91, 80, 50, 35, 58, 65, 83, 73, 67, 33, 28, 45, 71, 60, 58, 62, 33, 25, 71, 67, 68, 63, 54, 46, 33, 58,
  64, 70, 60, 81, 35, 32, 47, 58,
];
const DATES = ["1/26/22", "2/5/22", "2/15/22", "2/25/22", "3/7/22", "3/17/22", "3/27/22", "4/6/22", "4/16/22", "4/26/22", "5/6/22", "5/16/22"];

@customElement("cases-chart")
export class CasesChart extends LitElement {
  static styles = css`
    :host {
      display: block;
    }
    .plot {
      display: block;
      width: 723px;
      height: 362px;
      font: 24px "Liberation Sans", Arial, sans-serif;
      overflow: visible;
    }
    .tick {
      fill: #666;
    }
    .grid {
      stroke: rgba(0, 0, 0, 0.1);
      stroke-width: 2;
    }
    .series {
      fill: none;
      stroke: #cc1034;
      stroke-width: 6;
    }
    .swatch {
      fill: rgba(204, 16, 52, 0.6);
      stroke: #cc1034;
      stroke-width: 6;
    }
  `;

  render() {
    const left = 135;
    const right = 719.5;
    const top = 57;
    const bottom = 245;
    const step = (right - left) / (DAILY.length - 1);
    const line = DAILY.map((v, i) => `${(left + i * step).toFixed(1)},${(bottom - (v / 395) * (bottom - top)).toFixed(1)}`).join(" ");
    const rows = ["4,000,000", "3,000,000", "2,000,000", "1,000,000", "0"];
    return html`
      <svg class="plot" viewBox="0 0 723 362">
        <rect class="swatch" x="262" y="13" width="80" height="24"></rect>
        <text class="tick" x="354" y="33">undefined</text>
        ${rows.map((t, i) => {
          const y = top + i * 47;
          return svg`<line class="grid" x1="120" x2=${right} y1=${y} y2=${y}></line>
            <text class="tick" text-anchor="end" x="113" y=${y + 8}>${t}</text>`;
        })}
        <line class="grid" x1=${left} x2=${right} y1=${bottom} y2=${bottom}></line>
        <line class="grid" x1=${left} x2=${left} y1=${top} y2=${bottom}></line>
        ${DATES.map((t, i) => {
          const x = left + i * 49.5;
          return svg`<line class="grid" x1=${x} x2=${x} y1=${top} y2="261"></line>
            <text class="tick" text-anchor="end" transform="translate(${x + 16} 280) rotate(-50)">${t}</text>`;
        })}
        <polyline class="series" points=${line}></polyline>
      </svg>
    `;
  }
}

/* ---------- stat card ---------- */

@customElement("info-box")
export class InfoBox extends LitElement {
  @property() heading = "";
  @property() today = "";
  @property() total = "";

  static styles = css`
    :host {
      display: block;
      box-sizing: border-box;
      height: 240px;
      padding: 32px;
      border-radius: 8px;
      background: #fff;
      box-shadow: 0 4px 2px -2px rgba(0, 0, 0, 0.2), 0 2px 2px rgba(0, 0, 0, 0.14), 0 2px 6px rgba(0, 0, 0, 0.12);
      white-space: nowrap;
    }
    .soft {
      font: 32px/48px Roboto, sans-serif;
      letter-spacing: 0.3px;
      color: #666;
    }
    .today {
      height: 64px;
      font: 700 48px/70px "Open Sans", "Noto Sans", sans-serif;
      color: #212121;
      letter-spacing: 0.45px;
    }
    .unit {
      letter-spacing: -2px;
      margin-right: 2px;
    }
  `;

  render() {
    return html`
      <div class="soft">${this.heading}</div>
      <div class="today">${this.today} <span class="unit">today</span></div>
      <div class="soft">${this.total} total</div>
    `;
  }
}

/* ---------- page ---------- */

const COUNTRIES: [string, string][] = [
  ["USA", "85242999"],
  ["India", "43142192"],
  ["Brazil", "30836815"],
  ["France", "29413371"],
  ["Germany", "26196089"],
  ["UK", "22271122"],
  ["Russia", "18305973"],
  ["S. Korea", "18017923"],
  ["Italy", "17312432"],
  ["Turkey", "15064507"],
  ["", ""],
];

@customElement("app-root")
export class AppRoot extends LitElement {
  static styles = css`
    :host {
      display: flex;
      box-sizing: border-box;
      width: 2736px;
      height: 1526px;
      overflow: hidden;
      border-top: 1px solid #69696d;
      border-bottom: 3px solid #1d1d20;
      background: #f5f6fa;
      font-family: "Open Sans", "Noto Sans", sans-serif;
    }
    .page {
      flex: 1;
      display: flex;
      align-items: flex-start;
      gap: 87px;
      padding: 40px 0 0 127px;
    }
    .left {
      width: 1574px;
      flex: none;
    }
    .header {
      display: flex;
      justify-content: space-between;
      height: 112px;
      margin-bottom: 40px;
    }
    .title {
      margin: 0;
      font-size: 64px;
      line-height: 119px;
      font-weight: 700;
      letter-spacing: -1.45px;
      color: #000;
      white-space: nowrap;
    }
    .select {
      box-sizing: border-box;
      width: 245px;
      height: 112px;
      display: flex;
      align-items: center;
      justify-content: space-between;
      padding: 0 26px 0 27px;
      border: 2px solid #bbbcc0;
      border-radius: 8px;
      font: 32px/46px Roboto, sans-serif;
      letter-spacing: 0.3px;
      color: #212121;
    }
    .caret {
      width: 20px;
      height: 10px;
      fill: #717276;
    }
    .stats {
      display: flex;
      justify-content: space-between;
      margin-bottom: 32px;
    }
    .map-card {
      padding: 32px;
      border-radius: 40px;
      background: #fff;
      box-shadow: 0 0 16px -2px rgba(0, 0, 0, 0.22);
    }
    .right {
      box-sizing: border-box;
      width: 787px;
      height: 1600px;
      padding: 32px;
      border-radius: 8px;
      background: #fff;
      box-shadow: 0 4px 2px -2px rgba(0, 0, 0, 0.2), 0 2px 2px rgba(0, 0, 0, 0.1), 0 2px 6px rgba(0, 0, 0, 0.12);
    }
    .subtitle {
      margin: 0;
      height: 50px;
      font-size: 37.4px;
      line-height: 53px;
      font-weight: 700;
      color: #212121;
      white-space: nowrap;
      letter-spacing: -1.05px;
    }
    .chart-title {
      line-height: 46px;
      letter-spacing: -1.15px;
    }
    .table {
      display: grid;
      grid-template-columns: 689px 34px;
      grid-template-rows: 766px 34px;
      margin-top: 39px;
      margin-bottom: 4px;
    }
    .chart {
      margin-top: 2px;
    }
    .rows {
      overflow: hidden;
    }
    .row {
      display: flex;
      justify-content: space-between;
      box-sizing: border-box;
      height: 75px;
      padding: 0 16px;
      font-size: 32px;
      line-height: 79px;
      color: #6a5d5d;
    }
    .row:nth-child(odd) {
      background: #f3f2f8;
    }
    .name {
      letter-spacing: -1.2px;
    }
    .count {
      font-weight: 700;
      letter-spacing: 0.15px;
    }
    .corner {
      background: #dcdcdc;
    }
    .bar {
      box-sizing: border-box;
      display: flex;
      justify-content: space-between;
      align-items: center;
      background: #f1f1f1;
    }
    .bar-v {
      flex-direction: column;
      width: 34px;
      padding: 14px 0;
    }
    .bar-h {
      padding: 0 13px;
    }
    .thumb {
      width: 30px;
      background: #c1c1c1;
    }
    .thumb-small {
      height: 34px;
      margin: 12px 0 auto;
    }
    .thumb-page {
      height: 1411px;
      margin: 12px 0 auto;
    }
    .arrow {
      display: block;
      flex: none;
      fill: #a3a3a3;
    }
    .arrow-dark {
      fill: #505050;
    }
  `;

  private arrow(dir: "up" | "down" | "left" | "right", dark = false) {
    const d = { up: "M8 0L16 8H0z", down: "M0 0H16L8 8z", left: "M0 8L8 0V16z", right: "M8 8L0 0V16z" }[dir];
    const [w, h] = dir === "up" || dir === "down" ? [16, 8] : [8, 16];
    return html`<svg class=${dark ? "arrow arrow-dark" : "arrow"} width=${w} height=${h} viewBox="0 0 ${w} ${h}"><path d=${d}></path></svg>`;
  }

  render() {
    return html`
      <main class="page">
        <section class="left">
          <div class="header">
            <h1 class="title">Covid-19 Tracker</h1>
            <div class="select">
              <span>Worldwide</span>
              <svg class="caret" viewBox="0 0 20 10"><path d="M0 0h20L10 10z"></path></svg>
            </div>
          </div>
          <div class="stats">
            <info-box heading="Coronavirus Cases" today="427808" total="529272500"></info-box>
            <info-box heading="Recovered" today="599541" total="499853665"></info-box>
            <info-box heading="Deaths" today="756" total="6304540"></info-box>
          </div>
          <div class="map-card"><world-map></world-map></div>
        </section>
        <aside class="right">
          <h3 class="subtitle">Live Cases by Country</h3>
          <div class="table">
            <div class="rows">
              ${COUNTRIES.map(([n, c]) => html`<div class="row"><span class="name">${n}</span><span class="count">${c}</span></div>`)}
            </div>
            <div class="bar bar-v">
              ${this.arrow("up")}
              <div class="thumb thumb-small"></div>
              ${this.arrow("down", true)}
            </div>
            <div class="bar bar-h">${this.arrow("left")}${this.arrow("right")}</div>
            <div class="corner"></div>
          </div>
          <h3 class="subtitle chart-title">Worldwide New Cases</h3>
          <cases-chart class="chart"></cases-chart>
        </aside>
      </main>
      <div class="bar bar-v">
        ${this.arrow("up")}
        <div class="thumb thumb-page"></div>
        ${this.arrow("down", true)}
      </div>
    `;
  }
}
